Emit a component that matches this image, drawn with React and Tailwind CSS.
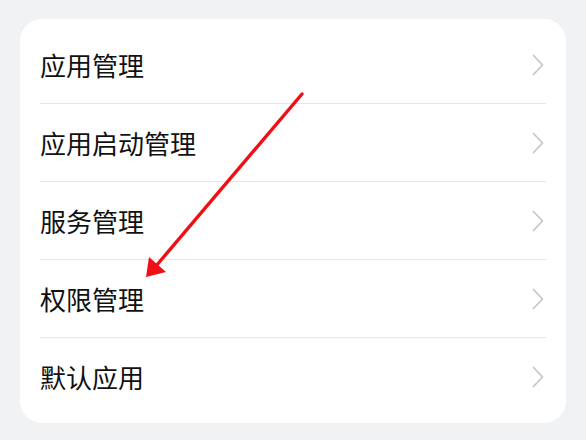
import React from 'react'

const items = ['应用管理', '应用启动管理', '服务管理', '权限管理', '默认应用']

function Chevron() {
	return (
		<svg width="12" height="22" viewBox="0 0 12 22" fill="none">
			<path d="M1.5 1.5 L10.5 11 L1.5 20.5" stroke="#c7c7c9" strokeWidth="1.8" strokeLinecap="round" strokeLinejoin="round" />
		</svg>
	)
}

export default function App() {
	return (
		<div className="relative h-[440px] w-[586px] bg-[#f1f2f4] px-[20px] pt-[19px]" style={{ fontFamily: '"Noto Sans CJK SC", "Noto Sans", sans-serif' }}>
			<div className="rounded-[22px] bg-white py-[7px]">
				{items.map((label, i) => (
					<div
						key={label}
						className={'mx-[20px] flex h-[78px] items-center justify-between pr-[2px] ' + (i < items.length - 1 ? 'border-b border-[#e6e6e8]' : '')}
					>
						<span className="text-[26px] leading-none text-[#111]">{label}</span>
						<Chevron />
					</div>
				))}
			</div>
			{/* red pointer */}
			<svg className="pointer-events-none absolute left-0 top-0" width="586" height="440">
				<line x1="302" y1="94" x2="156" y2="266" stroke="#ee1016" strokeWidth="3.4" strokeLinecap="round" />
				<polygon points="146,277 149,257 166,272" fill="#ee1016" />
			</svg>
		</div>
	)
}
